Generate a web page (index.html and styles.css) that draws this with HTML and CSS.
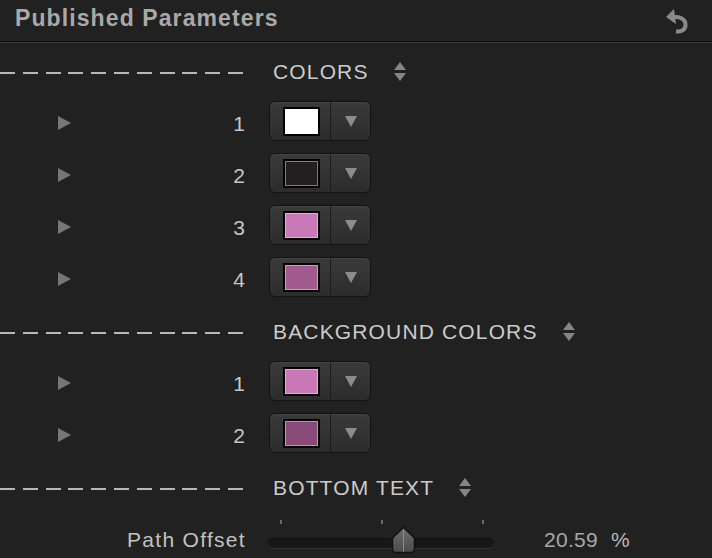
FILE: index.html
```html
<!DOCTYPE html>
<html lang="en">
<head>
<meta charset="utf-8">
<title>Published Parameters</title>
<link rel="stylesheet" href="styles.css">
</head>
<body>
<div class="panel">
  <header class="hdr">
    <h1 class="title">Published Parameters</h1>
    <svg class="reset" width="26" height="28" viewBox="0 0 26 28">
      <polygon points="2,10 10,2 12,17" fill="#8a8a8a"/>
      <path d="M8,10.5 C16,8.5 22,12.5 21.5,18.5 C21,23.5 16.5,25 12,24.5" fill="none" stroke="#8a8a8a" stroke-width="4" stroke-linecap="butt"/>
    </svg>
  </header>

  <div class="rows">
    <div class="row section">
      <span class="dashes"></span>
      <div class="sec-title"><span>COLORS</span><svg class="stepper" width="12" height="20" viewBox="0 0 12 20"><polygon points="0,8 6,0 12,8"/><polygon points="0,11 12,11 6,19"/></svg></div>
    </div>

    <div class="row">
      <div class="lbl"><span class="disc"></span><span class="num">1</span></div>
      <div class="well"><span class="sw-wrap"><span class="swatch c-white"></span></span><span class="drop"><span class="tri"></span></span></div>
    </div>
    <div class="row">
      <div class="lbl"><span class="disc"></span><span class="num">2</span></div>
      <div class="well"><span class="sw-wrap"><span class="swatch c-dark"></span></span><span class="drop"><span class="tri"></span></span></div>
    </div>
    <div class="row">
      <div class="lbl"><span class="disc"></span><span class="num">3</span></div>
      <div class="well"><span class="sw-wrap"><span class="swatch c-pink"></span></span><span class="drop"><span class="tri"></span></span></div>
    </div>
    <div class="row">
      <div class="lbl"><span class="disc"></span><span class="num">4</span></div>
      <div class="well"><span class="sw-wrap"><span class="swatch c-plum"></span></span><span class="drop"><span class="tri"></span></span></div>
    </div>

    <div class="row section">
      <span class="dashes"></span>
      <div class="sec-title"><span>BACKGROUND COLORS</span><svg class="stepper" width="12" height="20" viewBox="0 0 12 20"><polygon points="0,8 6,0 12,8"/><polygon points="0,11 12,11 6,19"/></svg></div>
    </div>

    <div class="row">
      <div class="lbl"><span class="disc"></span><span class="num">1</span></div>
      <div class="well"><span class="sw-wrap"><span class="swatch c-pink2"></span></span><span class="drop"><span class="tri"></span></span></div>
    </div>
    <div class="row">
      <div class="lbl"><span class="disc"></span><span class="num">2</span></div>
      <div class="well"><span class="sw-wrap"><span class="swatch c-grape"></span></span><span class="drop"><span class="tri"></span></span></div>
    </div>

    <div class="row section">
      <span class="dashes"></span>
      <div class="sec-title"><span>BOTTOM TEXT</span><svg class="stepper" width="12" height="20" viewBox="0 0 12 20"><polygon points="0,8 6,0 12,8"/><polygon points="0,11 12,11 6,19"/></svg></div>
    </div>

    <div class="row">
      <div class="lbl lbl-right"><span class="plabel">Path Offset</span></div>
      <div class="slider-cell">
        <div class="slider">
          <div class="ticks"><span class="tick"></span><span class="tick"></span><span class="tick"></span></div>
          <div class="track"></div>
          <svg class="thumb" width="25" height="28" viewBox="0 0 25 28">
            <defs>
              <linearGradient id="tg" x1="0" y1="0" x2="0" y2="1">
                <stop offset="0" stop-color="#6e6e6e"/>
                <stop offset="1" stop-color="#4b4b4b"/>
              </linearGradient>
            </defs>
            <path d="M1.5,12 L12.5,1.5 L23.5,12 L23.5,23 Q23.5,26.5 20,26.5 L5,26.5 Q1.5,26.5 1.5,23 Z" fill="url(#tg)" stroke="#111" stroke-width="1.5"/>
            <line x1="12.5" y1="3" x2="12.5" y2="25.5" stroke="#8c8c8c" stroke-width="1"/>
          </svg>
        </div>
        <span class="val">20.59</span><span class="unit">%</span>
      </div>
    </div>
  </div>
</div>
</body>
</html>
```

FILE: styles.css
```css
html, body {
  margin: 0;
  padding: 0;
}
body {
  background: #212121;
  font-family: "Liberation Sans", Arial, sans-serif;
  width: 712px;
  height: 558px;
  overflow: hidden;
}
.panel {
  width: 712px;
}
.hdr {
  box-sizing: border-box;
  height: 42px;
  display: flex;
  align-items: center;
  justify-content: space-between;
  padding: 0 22px 4px 15px;
  border-bottom: 1px solid #0e0e0e;
  box-shadow: 0 1px 0 #3a3a3a;
}
.title {
  margin: 0;
  font-size: 23px;
  font-weight: bold;
  letter-spacing: 1.1px;
  color: #a9a9a9;
}
.reset {
  display: block;
  margin-top: 4px;
}
.rows {
  padding-top: 4px;
}
.row {
  height: 52px;
  display: grid;
  grid-template-columns: 245px 1fr;
  column-gap: 24px;
  align-items: center;
}
.dashes {
  display: block;
  height: 2px;
  margin-top: 2px;
  background: repeating-linear-gradient(to right, #b8b8b8 0 15px, transparent 15px 22.8px);
}
.sec-title {
  display: flex;
  align-items: center;
  gap: 25px;
  padding-left: 4px;
  font-size: 21px;
  letter-spacing: 1.15px;
  color: #cbcbcb;
}
.stepper {
  display: block;
  fill: #858585;
}
.lbl {
  display: flex;
  align-items: center;
  justify-content: space-between;
  padding-left: 58px;
}
.lbl-right {
  justify-content: flex-end;
}
.disc {
  width: 0;
  height: 0;
  border-left: 13px solid #767676;
  border-top: 7.5px solid transparent;
  border-bottom: 7.5px solid transparent;
  margin-top: -2px;
}
.num {
  font-size: 21px;
  color: #c6c6c6;
}
.plabel {
  font-size: 21px;
  letter-spacing: 1.3px;
  margin-right: -1px;
  color: #c2c2c2;
}
.well {
  align-self: start;
  margin-top: 3px;
  box-sizing: border-box;
  width: 102px;
  height: 40px;
  border: 1px solid #121212;
  border-radius: 6px;
  background: linear-gradient(#3a3a3a, #2c2c2c);
  box-shadow: inset 0 1px 0 rgba(255,255,255,0.06);
  display: flex;
}
.sw-wrap {
  width: 61px;
  display: flex;
  align-items: center;
  justify-content: center;
  border-right: 1px solid #1c1c1c;
  padding-left: 2px;
  box-sizing: border-box;
}
.swatch {
  box-sizing: border-box;
  width: 37px;
  height: 29px;
  border: 2px solid #000;
  box-shadow: inset 0 0 0 1px rgba(255,255,255,0.42);
}
.c-white { background: #ffffff; }
.c-dark  { background: #231f20; }
.c-pink  { background: #c978b8; }
.c-plum  { background: #a05a8e; }
.c-pink2 { background: #c877b7; }
.c-grape { background: #8a4a79; }
.drop {
  flex: 1;
  display: flex;
  align-items: center;
  justify-content: center;
}
.tri {
  width: 0;
  height: 0;
  border-top: 11px solid #8c8c8c;
  border-left: 6.5px solid transparent;
  border-right: 6.5px solid transparent;
}
.slider-cell {
  display: flex;
  align-items: center;
  margin-left: -1px;
}
.slider {
  position: relative;
  width: 226px;
  height: 52px;
  display: flex;
  flex-direction: column;
}
.ticks {
  margin-top: 6px;
  height: 4px;
  display: flex;
  justify-content: space-between;
  padding: 0 10px 0 12px;
}
.tick {
  width: 2px;
  height: 4px;
  background: #6a6a6a;
}
.track {
  margin-top: 14px;
  height: 10px;
  border-radius: 5px;
  background: #181818;
  box-shadow: inset 0 1px 1px #111, 0 1px 0 #343434;
}
.thumb {
  position: absolute;
  left: 123px;
  top: 12px;
}
.val {
  margin-left: 50px;
  font-size: 21px;
  letter-spacing: 0.3px;
  color: #a8a8a8;
}
.unit {
  margin-left: 13px;
  font-size: 21px;
  color: #b8b8b8;
}
```
